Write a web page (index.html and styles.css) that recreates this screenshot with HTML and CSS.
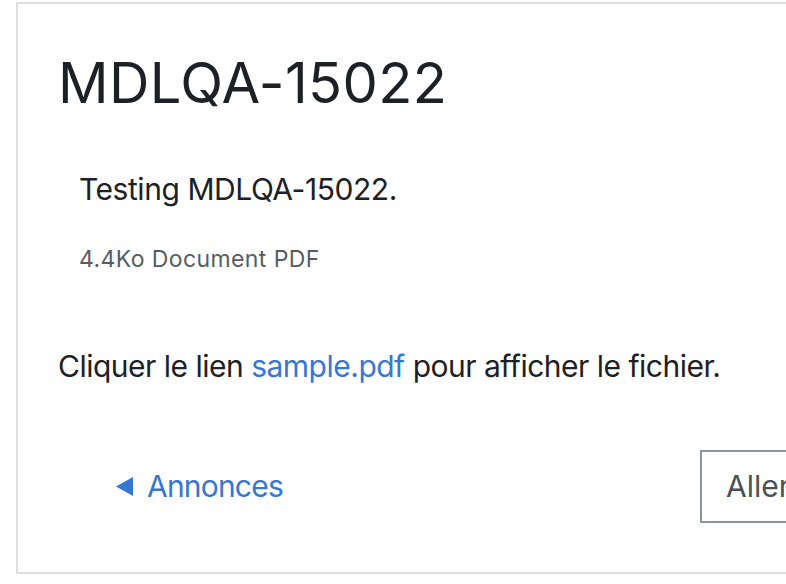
FILE: index.html
```html
<!DOCTYPE html>
<html lang="fr">
<head>
    <meta charset="UTF-8">
    <meta name="viewport" content="width=device-width, initial-scale=1.0">
    <title>MDLQA-15022</title>
    <link rel="stylesheet" href="styles.css">
</head>
<body>
    <div class="page">
        <div class="card">
            <h2 class="title">MDLQA-15022</h2>

            <div class="intro">
                <p>Testing MDLQA-15022.</p>
                <div class="details">4.4Ko Document PDF</div>
            </div>

            <p class="file-link">Cliquer le lien <a href="#">sample.pdf</a> pour afficher le fichier.</p>

            <div class="activity-nav">
                <div class="nav-prev">
                    <a href="#" class="prev-link">
                        <svg class="arrow" width="17" height="19" viewBox="0 0 17 19"><polygon points="17,0 17,19 0,9.5" fill="currentColor"/></svg>
                        Annonces
                    </a>
                </div>
                <div class="nav-jump">
                    <div class="jump-select">Aller à…</div>
                </div>
            </div>
        </div>
    </div>
</body>
</html>
```

FILE: styles.css
```css
* {
    margin: 0;
    padding: 0;
    box-sizing: border-box;
}

body {
    font-family: Inter, "Liberation Sans", sans-serif;
    color: #1d2125;
    background: white;
    overflow: hidden;
}

.page {
    width: 1000px;
    padding: 2px 0 0 16px;
}

.card {
    border: 2px solid #dedede;
    background: white;
    padding: 46px 40px 49px 40px;
}

.title {
    font-size: 56px;
    font-weight: 400;
    line-height: 1.2;
    letter-spacing: 0.4px;
    margin-bottom: 50px;
}

.intro {
    padding-left: 21px;
}

.intro p {
    font-size: 30px;
    line-height: 1.5;
    letter-spacing: -0.45px;
    margin-bottom: 30px;
}

.details {
    font-size: 23px;
    line-height: 1.5;
    letter-spacing: 0.4px;
    color: #585c61;
}

.file-link {
    font-size: 30px;
    line-height: 1.5;
    letter-spacing: -0.5px;
    margin-top: 67px;
}

a {
    color: #3677d4;
    text-decoration: none;
}

.activity-nav {
    display: grid;
    grid-template-columns: 642px auto;
    align-items: center;
    margin-top: 61px;
}

.nav-prev {
    padding-left: 58px;
}

.prev-link {
    display: inline-flex;
    align-items: center;
    gap: 14px;
    font-size: 30px;
    line-height: 1.5;
    letter-spacing: -0.8px;
}

.arrow {
    display: block;
}

.jump-select {
    display: inline-block;
    border: 2px solid #8f959e;
    height: 73px;
    padding: 0 60px 0 24px;
    font-size: 30px;
    line-height: 69px;
    color: #495057;
}
```
